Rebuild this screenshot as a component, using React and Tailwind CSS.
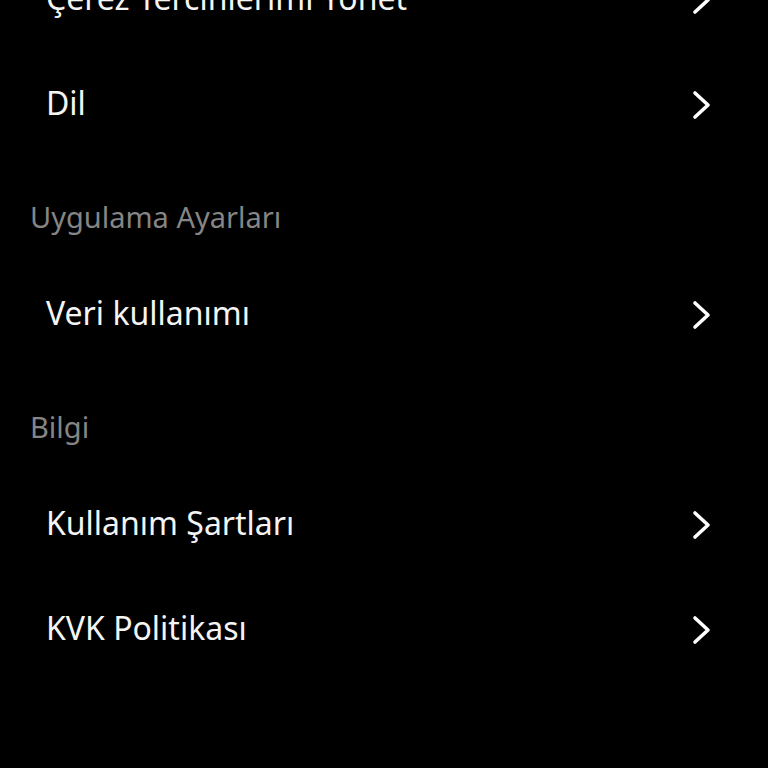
import React from "react";

const sections = [
  { title: null, items: ["Çerez Tercihlerimi Yönet", "Dil"] },
  { title: "Uygulama Ayarları", items: ["Veri kullanımı"] },
  { title: "Bilgi", items: ["Kullanım Şartları", "KVK Politikası"] },
];

const Chevron = () => (
  <svg width="22" height="32" viewBox="0 0 22 32" fill="none">
    <path
      d="M5 4 L18 16 L5 28"
      stroke="#ffffff"
      strokeWidth="3.6"
      strokeLinecap="round"
      strokeLinejoin="round"
    />
  </svg>
);

const Row = ({ label }) => (
  <div className="flex h-[105px] items-center justify-between pl-[46px] pr-[56px]">
    <span className="pb-[4px] text-[32px] leading-none text-[#f4f4f4]">{label}</span>
    <Chevron />
  </div>
);

export default function App() {
  return (
    <div
      className="h-screen w-full overflow-hidden bg-black"
      style={{ fontFamily: '"Noto Sans", "Open Sans", sans-serif' }}
    >
      <div className="-mt-[53px]">
        {sections.map((s, i) => (
          <div key={i}>
            {s.title && (
              <div className="flex h-[105px] items-center pl-[30px] pt-[14px]">
                <span className="text-[29px] leading-none text-[#858585]">{s.title}</span>
              </div>
            )}
            {s.items.map((it) => (
              <Row key={it} label={it} />
            ))}
          </div>
        ))}
      </div>
    </div>
  );
}
